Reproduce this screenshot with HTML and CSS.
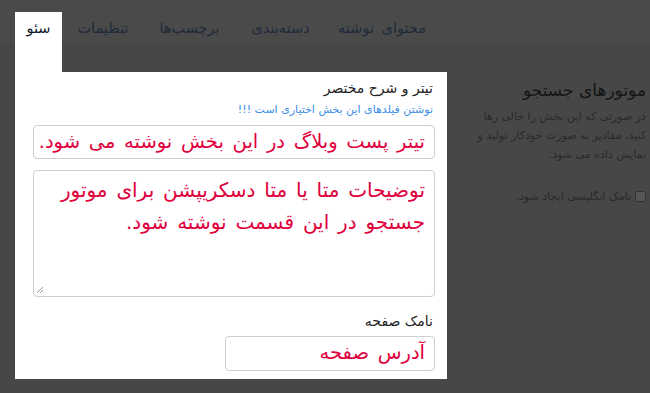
FILE: index.html
```html
<!DOCTYPE html>
<html lang="fa" dir="rtl">
<head>
<meta charset="utf-8">
<link rel="stylesheet" href="styles.css">
</head>
<body>
<header class="tabbar">
  <nav class="tabs">
    <span class="tab t-content">محتوای نوشته</span>
    <span class="tab t-cat">دسته‌بندی</span>
    <span class="tab t-tags">برچسب‌ها</span>
    <span class="tab t-set">تنظیمات</span>
    <span class="tab active">سئو</span>
  </nav>
</header>
<div class="content">
  <aside class="side">
    <h2 class="side-title">موتورهای جستجو</h2>
    <p class="side-desc">در صورتی که این بخش را خالی رها کنید، مقادیر به صورت خودکار تولید و نمایش داده می شود.</p>
    <label class="check"><span class="box"></span>نامک انگلیسی ایجاد شود.</label>
  </aside>
  <main class="panel">
    <div class="label">تیتر و شرح مختصر</div>
    <div class="note">نوشتن فیلدهای این بخش اختیاری است !!!</div>
    <div class="field title">تیتر پست وبلاگ در این بخش نوشته می شود.</div>
    <div class="area">توضیحات متا یا متا دسکریپشن برای موتور جستجو در این قسمت نوشته شود.<svg class="grip" width="8" height="8" viewBox="0 0 8 8"><path d="M1 7 L7 1 M4 7 L7 4 M6.5 7 L7 6.5" stroke="#9a9a9a" stroke-width="1"/></svg></div>
    <div class="label label2">نامک صفحه</div>
    <div class="field slug">آدرس صفحه</div>
  </main>
</div>
</body>
</html>
```
FILE: styles.css
```css
html, body {
  margin: 0;
  padding: 0;
}
body {
  width: 650px;
  height: 393px;
  background: #474747;
  font-family: "DejaVu Sans", "Noto Sans", sans-serif;
  direction: rtl;
  overflow: hidden;
}
.tabbar {
  height: 45px;
  background: #4a4a4a;
  border-bottom: 1px solid #444444;
  box-sizing: border-box;
}
.tabs {
  width: 432px;
  margin-right: 203px;
  padding-top: 12px;
  display: flex;
  justify-content: flex-end;
  align-items: flex-start;
  height: 45px;
  box-sizing: border-box;
}
.tab {
  padding-top: 6px;
  height: 27px;
  font-size: 14.5px;
  line-height: 20px;
  color: #1f2b3a;
  white-space: nowrap;
  text-align: center;
  word-spacing: 3px;
}
.t-content { width: 112px; }
.t-cat { width: 91px; }
.t-tags { width: 91px; }
.t-set { width: 82px; }
.tab.active {
  background: #ffffff;
  height: 61px;
  box-sizing: border-box;
  width: 47px;
  color: #10182a;
  position: relative;
  z-index: 1;
}
.content {
  display: flex;
  align-items: flex-start;
}
.side {
  width: 203px;
  box-sizing: border-box;
  padding: 33px 4px 0 24px;
}
.side-title {
  margin: 0;
  font-size: 17px;
  font-weight: normal;
  line-height: 24px;
  color: #141414;
}
.side-desc {
  margin: 5px 0 0;
  font-size: 11px;
  line-height: 19px;
  color: #2a2a2a;
}
.check {
  display: flex;
  align-items: center;
  gap: 4px;
  margin-top: 26px;
  font-size: 11px;
  color: #2a2a2a;
}
.box {
  width: 9px;
  height: 9px;
  border: 1px solid #333;
  border-radius: 2px;
  background: #555;
}
.panel {
  width: 432px;
  height: 307px;
  margin-top: 27px;
  background: #ffffff;
  box-sizing: border-box;
  padding: 6px 14px 0 18px;
}
.label {
  font-size: 14px;
  line-height: 20px;
  color: #222;
}
.note {
  margin-top: 3px;
  font-size: 11px;
  line-height: 18px;
  color: #3b8ee8;
}
.field {
  margin: 6px -2px 0 0;
  height: 34px;
  box-sizing: border-box;
  border: 1px solid #cfcfcf;
  border-radius: 4px;
  padding: 0 9px;
  font-size: 19.5px;
  line-height: 32px;
  color: #e0003c;
  white-space: nowrap;
  overflow: hidden;
  word-spacing: 2.5px;
}
.area {
  position: relative;
  margin: 11px -2px 0 0;
  height: 127px;
  box-sizing: border-box;
  border: 1px solid #cfcfcf;
  border-radius: 4px;
  padding: 3px 9px 0 4px;
  font-size: 20px;
  line-height: 32px;
  color: #e0003c;
  word-spacing: 2.5px;
}
.grip {
  position: absolute;
  left: 2px;
  bottom: 2px;
}
.label2 {
  margin-top: 14px;
}
.slug {
  margin-top: 5px;
  width: 210px;
  height: 35px;
}
```
